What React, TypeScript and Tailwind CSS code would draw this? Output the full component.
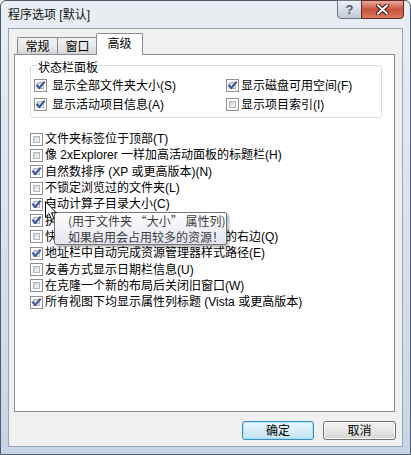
import React from "react";

const FONT = "font-['Liberation_Sans','Noto_Sans_CJK_SC',sans-serif]";
const CJK = "font-['Noto_Sans_CJK_SC',sans-serif]";

function Check({ checked }: { checked: boolean }) {
  return (
    <span className="relative inline-block h-[13px] w-[13px] shrink-0 border border-[#8e8f8f] bg-white">
      <span className="absolute inset-[2px] border border-[#b4b9bf] bg-gradient-to-br from-[#cdd1d6] to-[#f7f7f7]" />
      {checked && (
        <svg className="absolute left-0 top-0" width="11" height="11" viewBox="0 0 11 11">
          <path d="M2 5.5 L4.4 8 L9 2.5" fill="none" stroke="#3f54a0" strokeWidth="2.1" strokeLinecap="square" />
        </svg>
      )}
    </span>
  );
}

function Row({ checked, label, gap }: { checked: boolean; label: string; gap: string }) {
  return (
    <div className={`flex items-center ${gap} whitespace-nowrap`}>
      <Check checked={checked} />
      <span className="leading-[14px] text-black">{label}</span>
    </div>
  );
}

const options: { checked: boolean; label: string }[] = [
  { checked: false, label: "文件夹标签位于顶部(T)" },
  { checked: false, label: "像 2xExplorer 一样加高活动面板的标题栏(H)" },
  { checked: true, label: "自然数排序 (XP 或更高版本)(N)" },
  { checked: false, label: "不锁定浏览过的文件夹(L)" },
  { checked: true, label: "自动计算子目录大小(C)" },
  { checked: true, label: "执行文件操作时显示进度(P)" },
  { checked: false, label: "快速查看窗格始终显示在活动面板的右边(Q)" },
  { checked: true, label: "地址栏中自动完成资源管理器样式路径(E)" },
  { checked: false, label: "友善方式显示日期栏信息(U)" },
  { checked: false, label: "在克隆一个新的布局后关闭旧窗口(W)" },
  { checked: true, label: "所有视图下均显示属性列标题 (Vista 或更高版本)" },
];

function Tab({ label, selected, className }: { label: string; selected?: boolean; className?: string }) {
  if (selected) {
    return (
      <div
        className={`relative z-10 mb-[-1px] flex h-[22px] items-start justify-center rounded-t-[2px] border border-b-0 border-[#898c95] bg-white pt-[2px] ${className ?? ""}`}
      >
        <span className="leading-[16px]">{label}</span>
      </div>
    );
  }
  return (
    <div
      className={`flex h-[17px] items-center justify-center rounded-t-[2px] border border-b-0 border-[#898c95] bg-gradient-to-b from-[#f3f3f3] via-[#e9e9e9] to-[#d4d4d4] ${className ?? ""}`}
    >
      <span className="mt-[2px] leading-[16px]">{label}</span>
    </div>
  );
}

function Cursor() {
  return (
    <svg className="absolute left-[45px] top-[201px] z-30" width="13" height="20" viewBox="0 0 13 20">
      <path
        d="M0.5 0.5 L0.5 16 L4 12.6 L6.6 18.6 L9 17.6 L6.5 11.8 L11.3 11.8 Z"
        fill="#ffffff"
        stroke="#000000"
        strokeWidth="1"
        strokeLinejoin="miter"
      />
    </svg>
  );
}

export default function App() {
  return (
    <div className={`${FONT} relative h-[455px] w-[411px] overflow-hidden text-[12px] text-black`}>
      {/* window frame */}
      <div className="flex h-full w-full flex-col rounded-t-[6px] border border-[#4e5b6a] bg-gradient-to-b from-[#e9eef3] via-[#d9e3ee] to-[#c6d5e6]">
        {/* caption */}
        <div className="relative flex h-[27px] shrink-0 items-center pl-[7px]">
          <span className="leading-[16px] text-[#111]">程序选项 [默认]</span>
          <div className="absolute right-[6px] top-[-1px] flex">
            <div className="flex h-[19px] w-[25px] items-center justify-center rounded-bl-[4px] border border-[#6b7786] bg-gradient-to-b from-[#eef2f6] via-[#d5dde6] to-[#c3ccd7]">
              <span className="text-[13px] font-bold leading-none text-[#4f5b69]">?</span>
            </div>
            <div className="-ml-px flex h-[19px] w-[43px] items-center justify-center rounded-br-[4px] border border-[#5b2a24] bg-gradient-to-b from-[#e7a99c] via-[#c8503c] to-[#d9785d]">
              <svg width="13" height="11" viewBox="0 0 13 11">
                <path d="M2 1.5 L11 9.5 M11 1.5 L2 9.5" stroke="#3a1510" strokeWidth="4" strokeLinecap="square" />
                <path d="M2 1.5 L11 9.5 M11 1.5 L2 9.5" stroke="#ffffff" strokeWidth="2" strokeLinecap="square" />
              </svg>
            </div>
          </div>
        </div>

        {/* client area */}
        <div className="mx-[7px] flex h-[419px] shrink-0 flex-col border border-[#98a6b6] bg-[#f0f0f0]">
          {/* tab strip */}
          <div className="flex h-[25px] items-end pl-[8px]">
            <Tab label="常规" className="w-[41px]" />
            <Tab label="窗口" className="-ml-px w-[41px]" />
            <Tab label="高级" selected className="-ml-[2px] w-[47px]" />
          </div>

          {/* tab page */}
          <div className="ml-[5px] h-[358px] w-[381px] border border-[#898c95] bg-white">
            {/* status bar group */}
            <div className="relative ml-[15px] mt-[10px] h-[53px] w-[352px] rounded-[3px] border border-[#d5dfe5]">
              <span className="absolute left-[6px] top-[-5px] bg-white px-[1px] leading-[14px]">状态栏面板</span>
              <div className="grid grid-cols-[192px_1fr] pl-[3px] pt-[10px]">
                <div className="flex h-[19px] items-center">
                  <Row checked label="显示全部文件夹大小(S)" gap="gap-[5px]" />
                </div>
                <div className="flex h-[19px] items-center">
                  <Row checked label="显示磁盘可用空间(F)" gap="gap-[2px]" />
                </div>
                <div className="flex h-[19px] items-center">
                  <Row checked label="显示活动项目信息(A)" gap="gap-[5px]" />
                </div>
                <div className="flex h-[19px] items-center">
                  <Row checked={false} label="显示项目索引(I)" gap="gap-[2px]" />
                </div>
              </div>
            </div>

            {/* option list */}
            <div className="mt-[13px] flex flex-col pl-[15px]">
              {options.map((o) => (
                <div key={o.label} className="flex h-[16.3px] items-center">
                  <Row checked={o.checked} label={o.label} gap="gap-[2px]" />
                </div>
              ))}
            </div>
          </div>

          {/* buttons */}
          <div className="mt-[9px] flex justify-end gap-[9px] pr-[6px]">
            <button className="flex h-[19px] w-[72px] items-center justify-center rounded-[3px] border border-[#3c8fc0] bg-gradient-to-b from-[#eaf6fd] via-[#d9eef9] to-[#bfe2f4] shadow-[inset_0_0_0_1px_#a6e1f7]">
              <span className="leading-[14px]">确定</span>
            </button>
            <button className="flex h-[19px] w-[73px] items-center justify-center rounded-[3px] border border-[#707070] bg-gradient-to-b from-[#f2f2f2] via-[#e8e8e8] to-[#d2d2d2] shadow-[inset_0_0_0_1px_#fbfbfb]">
              <span className="leading-[14px]">取消</span>
            </button>
          </div>
        </div>
      </div>

      {/* tooltip over the list */}
      <div
        className={`${CJK} absolute left-[54px] top-[212px] z-20 flex h-[33px] w-[173px] flex-col justify-center rounded-[2px] border border-[#767676] bg-gradient-to-b from-[#ffffff] to-[#e4e5f0] pl-[13px] text-[#3c3c3c] shadow-[2px_2px_3px_rgba(0,0,0,0.3)]`}
      >
        <span className="leading-[16px]">(用于文件夹 “大小” 属性列)</span>
        <span className="leading-[16px]">如果启用会占用较多的资源！</span>
      </div>

      <Cursor />
    </div>
  );
}
